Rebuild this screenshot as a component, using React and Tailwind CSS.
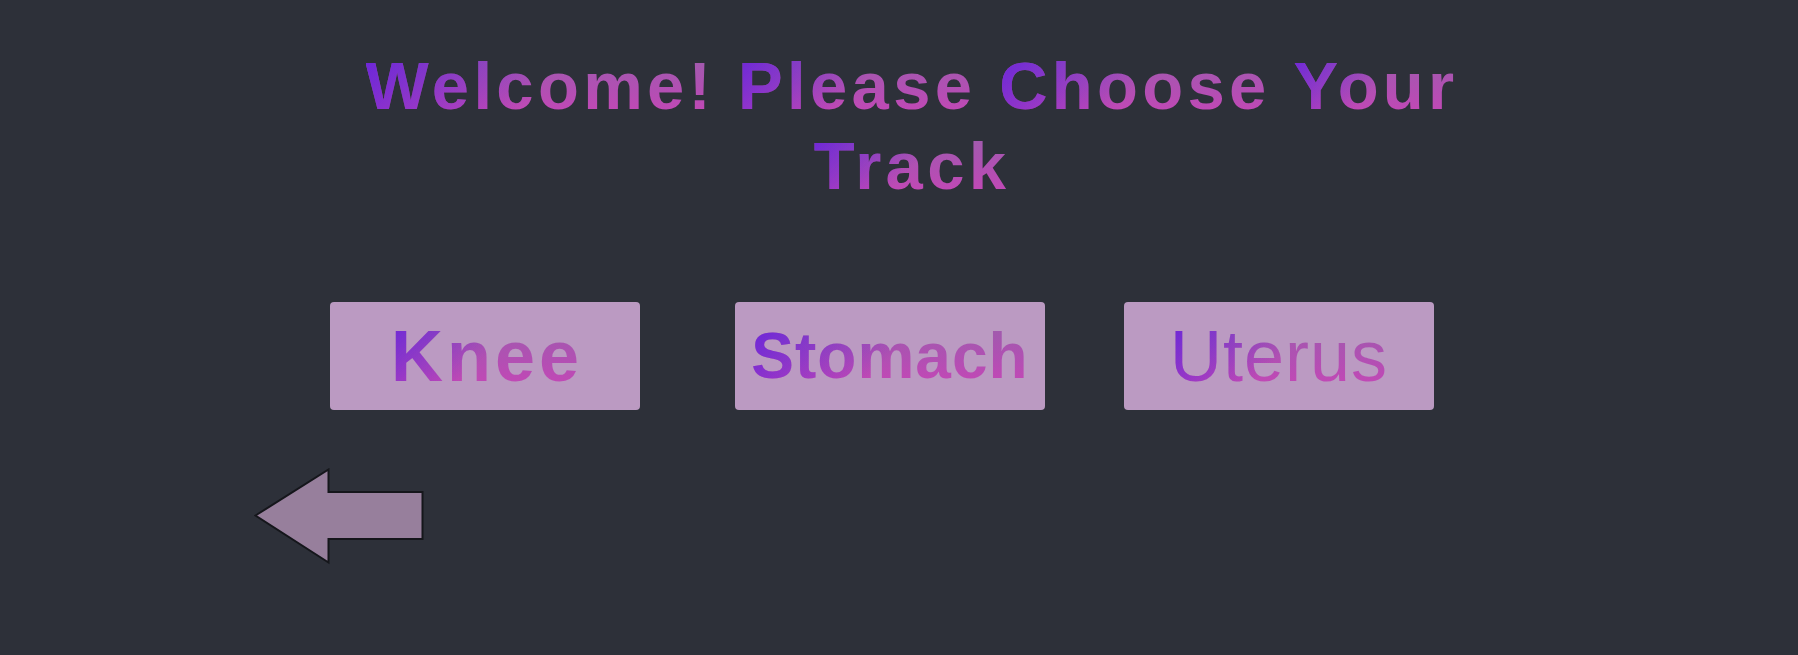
const wordGrad =
  "bg-[linear-gradient(135deg,#6a22dc_0%,rgba(106,34,220,0)_50%),linear-gradient(to_bottom,#9a5fab_0%,#b24fb3_55%,#cb44b7_100%)] bg-clip-text text-transparent";

function GradText({ text }) {
  const words = text.split(" ");
  return words.map((w, i) => (
    <span key={i}>
      <span className={`inline-block ${wordGrad}`}>{w}</span>
      {i < words.length - 1 ? " " : ""}
    </span>
  ));
}

function TrackButton({ label, className, textClass }) {
  return (
    <button
      className={`flex h-[108px] w-[310px] items-center justify-center rounded-[4px] bg-[#bb9ac2] ${className}`}
    >
      <span className={`inline-block ${wordGrad} ${textClass}`}>{label}</span>
    </button>
  );
}

export default function App() {
  return (
    <div
      className="h-[655px] w-full overflow-hidden bg-[#2d3039]"
      style={{ fontFamily: '"Liberation Sans", Arial, sans-serif' }}
    >
      <div className="flex justify-center pt-[46px] pl-[26px]">
        <h1 className="w-[1160px] text-center text-[67px] font-bold leading-[80px] tracking-[4.3px]">
          <GradText text="Welcome! Please Choose Your Track" />
        </h1>
      </div>

      <div className="mt-[96px] flex pl-[330px]">
        <TrackButton
          label="Knee"
          textClass="text-[72px] font-bold leading-[84px] tracking-[4px] pl-[4px]"
        />
        <TrackButton
          label="Stomach"
          className="ml-[95px]"
          textClass="text-[64px] font-bold leading-[76px] tracking-[1px]"
        />
        <TrackButton
          label="Uterus"
          className="ml-[79px]"
          textClass="text-[72px] font-normal leading-[84px] tracking-[1px]"
        />
      </div>

      <div className="mt-[58px] pl-[254px]">
        <svg width="172" height="97" viewBox="0 0 172 97">
          <path
            d="M1.5 47.5 L74.5 1.5 L74.5 24 L168.5 24 L168.5 71 L74.5 71 L74.5 94.5 Z"
            fill="#977f9c"
            stroke="#15161b"
            strokeWidth="2"
            strokeLinejoin="miter"
          />
        </svg>
      </div>
    </div>
  );
}
